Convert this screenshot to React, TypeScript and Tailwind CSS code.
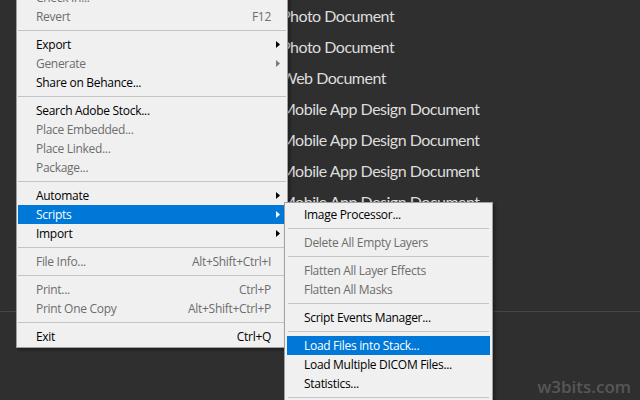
import clsx from 'clsx';

type Entry =
  | { sep: true }
  | {
      sep?: false;
      label: string;
      shortcut?: string;
      disabled?: boolean;
      arrow?: boolean;
      active?: boolean;
    };

const fileMenu: Entry[] = [
  { label: 'Check In...', disabled: true },
  { label: 'Revert', shortcut: 'F12', disabled: true },
  { sep: true },
  { label: 'Export', arrow: true },
  { label: 'Generate', arrow: true, disabled: true },
  { label: 'Share on Behance...' },
  { sep: true },
  { label: 'Search Adobe Stock...' },
  { label: 'Place Embedded...', disabled: true },
  { label: 'Place Linked...', disabled: true },
  { label: 'Package...', disabled: true },
  { sep: true },
  { label: 'Automate', arrow: true },
  { label: 'Scripts', arrow: true, active: true },
  { label: 'Import', arrow: true },
  { sep: true },
  { label: 'File Info...', shortcut: 'Alt+Shift+Ctrl+I', disabled: true },
  { sep: true },
  { label: 'Print...', shortcut: 'Ctrl+P', disabled: true },
  { label: 'Print One Copy', shortcut: 'Alt+Shift+Ctrl+P', disabled: true },
  { sep: true },
  { label: 'Exit', shortcut: 'Ctrl+Q' },
];

const scriptsMenu: Entry[] = [
  { label: 'Image Processor...' },
  { sep: true },
  { label: 'Delete All Empty Layers', disabled: true },
  { sep: true },
  { label: 'Flatten All Layer Effects', disabled: true },
  { label: 'Flatten All Masks', disabled: true },
  { sep: true },
  { label: 'Script Events Manager...' },
  { sep: true },
  { label: 'Load Files into Stack...', active: true },
  { label: 'Load Multiple DICOM Files...' },
  { label: 'Statistics...' },
  { sep: true },
  { label: 'Browse...' },
];

const documents = [
  'Photo Document',
  'Photo Document',
  'Web Document',
  'Mobile App Design Document',
  'Mobile App Design Document',
  'Mobile App Design Document',
  'Mobile App Design Document',
  'Mobile App Design Document',
  'Mobile App Design Document',
];

function Arrow({ color }: { color: string }) {
  return (
    <svg width="4" height="7" viewBox="0 0 4 7">
      <polygon points="0,0 4,3.5 0,7" fill={color} />
    </svg>
  );
}

function Separator({ inset }: { inset: string }) {
  return (
    <div className={clsx('h-[9px] flex items-center', inset)}>
      <div className="h-px w-full bg-[#c4c4c4]" />
    </div>
  );
}

function FileMenu() {
  return (
    <div className="absolute left-[16px] top-[-14px] w-[272px] bg-[#f0f0f0] border border-[#a0a0a0] py-px shadow-[2px_2px_3px_rgba(0,0,0,0.35)]">
      {fileMenu.map((e, i) =>
        e.sep ? (
          <Separator key={i} inset="mx-px" />
        ) : (
          <div
            key={i}
            className={clsx(
              'flex items-center h-[19px] mx-px pl-[18px] leading-[19px]',
              e.active ? 'bg-[#0078d7] text-white' : e.disabled ? 'text-[#6d6d6d]' : 'text-black'
            )}
          >
            <span className="flex-1 whitespace-nowrap">{e.label}</span>
            {e.shortcut && <span className="whitespace-nowrap">{e.shortcut}</span>}
            <span className="w-[15px] pl-[5px] flex items-center">
              {e.arrow && (
                <Arrow color={e.active ? '#ffffff' : e.disabled ? '#7a7a7a' : '#000000'} />
              )}
            </span>
          </div>
        )
      )}
    </div>
  );
}

function ScriptsMenu() {
  return (
    <div className="absolute left-[284px] top-[202px] w-[209px] bg-[#f0f0f0] border border-[#a0a0a0] pt-[2px] pb-px shadow-[2px_2px_3px_rgba(0,0,0,0.35)]">
      {scriptsMenu.map((e, i) =>
        e.sep ? (
          <Separator key={i} inset="mx-[3px]" />
        ) : (
          <div
            key={i}
            className={clsx(
              'flex items-center h-[19px] mx-[2px] pl-[17px] leading-[19px] whitespace-nowrap',
              e.active ? 'bg-[#0078d7] text-white' : e.disabled ? 'text-[#6d6d6d]' : 'text-black'
            )}
          >
            {e.label}
          </div>
        )
      )}
    </div>
  );
}

export default function App() {
  return (
    <div className="relative w-[640px] h-[400px] overflow-hidden bg-[#2f2f2f] font-['Open_Sans',sans-serif] text-[12px] tracking-[-0.3px]">
      <div className="h-[312px] border-b border-[#464646] overflow-hidden">
        <ul className="pl-[281px] font-['Lato',sans-serif] text-[16px] tracking-[-0.5px] text-[#dddddd]">
          {documents.map((d, i) => (
            <li key={i} className="h-[31px] leading-[31px]">
              {d}
            </li>
          ))}
        </ul>
      </div>
      <div className="h-[88px] flex items-end justify-end pr-[9px] pb-[3px]">
        <span className="text-[17px] font-semibold tracking-normal text-[#575757] leading-[20px]">w3bits.com</span>
      </div>

      <FileMenu />
      <ScriptsMenu />
    </div>
  );
}
